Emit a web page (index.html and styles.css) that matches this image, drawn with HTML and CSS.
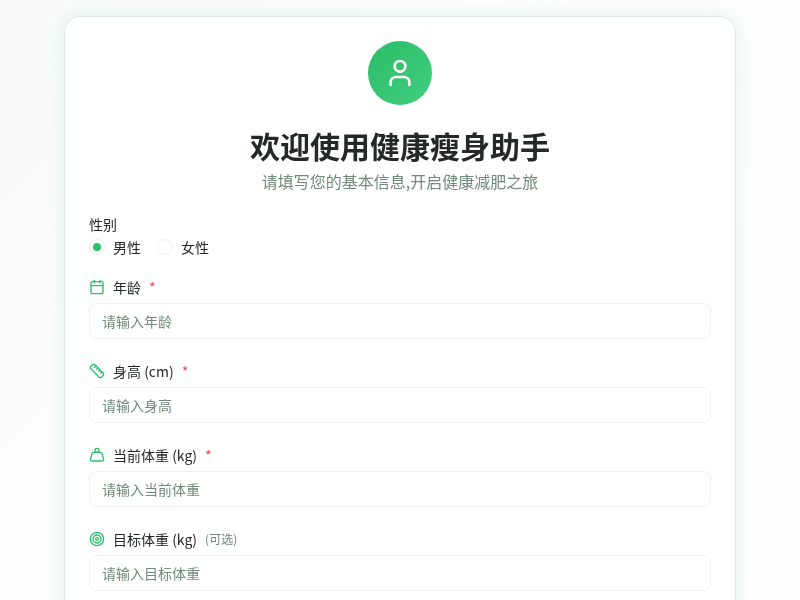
FILE: index.html
```html
<!DOCTYPE html>
<html lang="zh-CN">
<head>
  <meta charset="UTF-8">
  <title>健康瘦身助手</title>
  <meta name="viewport" content="width=device-width, initial-scale=1.0">
  <link rel="stylesheet" href="styles.css">
</head>
<body>
  <div class="card">
    <div class="header">
      <div class="logo">
        <svg width="32" height="32" viewBox="0 0 24 24" fill="none" stroke="#fff" stroke-width="2" stroke-linecap="round" stroke-linejoin="round">
          <path d="M19 21v-2a4 4 0 0 0-4-4H9a4 4 0 0 0-4 4v2"/>
          <circle cx="12" cy="7" r="4"/>
        </svg>
      </div>
      <h1>欢迎使用健康瘦身助手</h1>
      <p class="subtitle">请填写您的基本信息,开启健康减肥之旅</p>
    </div>
    <form autocomplete="off">
      <div class="gender">
        <div class="gender-label">性别</div>
        <div class="radio-row">
          <label class="radio"><span class="dot checked"></span>男性</label>
          <label class="radio"><span class="dot"></span>女性</label>
        </div>
      </div>

      <div class="field">
        <label class="field-label" for="age">
          <svg class="icon" viewBox="0 0 24 24" fill="none" stroke="currentColor" stroke-width="2" stroke-linecap="round" stroke-linejoin="round">
            <path d="M8 2v4"/><path d="M16 2v4"/><rect x="3" y="4" width="18" height="18" rx="2"/><path d="M3 10h18"/>
          </svg>
          <span>年龄</span><span class="req">*</span>
        </label>
        <input id="age" type="number" placeholder="请输入年龄">
      </div>

      <div class="field">
        <label class="field-label" for="height">
          <svg class="icon" viewBox="0 0 24 24" fill="none" stroke="currentColor" stroke-width="2" stroke-linecap="round" stroke-linejoin="round">
            <path d="M21.3 15.3a2.4 2.4 0 0 1 0 3.4l-2.6 2.6a2.4 2.4 0 0 1-3.4 0L2.7 8.7a2.41 2.41 0 0 1 0-3.4l2.6-2.6a2.41 2.41 0 0 1 3.4 0Z"/>
            <path d="m14.5 12.5 2-2"/><path d="m11.5 9.5 2-2"/><path d="m8.5 6.5 2-2"/><path d="m17.5 15.5 2-2"/>
          </svg>
          <span>身高 (cm)</span><span class="req">*</span>
        </label>
        <input id="height" type="number" placeholder="请输入身高">
      </div>

      <div class="field">
        <label class="field-label" for="weight">
          <svg class="icon" viewBox="0 0 24 24" fill="none" stroke="currentColor" stroke-width="2" stroke-linecap="round" stroke-linejoin="round">
            <circle cx="12" cy="5" r="3"/>
            <path d="M6.5 8a2 2 0 0 0-1.905 1.46L2.1 18.5A2 2 0 0 0 4 21h16a2 2 0 0 0 1.925-2.54L19.4 9.5A2 2 0 0 0 17.48 8Z"/>
          </svg>
          <span>当前体重 (kg)</span><span class="req">*</span>
        </label>
        <input id="weight" type="number" placeholder="请输入当前体重">
      </div>

      <div class="field">
        <label class="field-label" for="target">
          <svg class="icon" viewBox="0 0 24 24" fill="none" stroke="currentColor" stroke-width="2" stroke-linecap="round" stroke-linejoin="round">
            <circle cx="12" cy="12" r="10"/><circle cx="12" cy="12" r="6"/><circle cx="12" cy="12" r="2"/>
          </svg>
          <span>目标体重 (kg)</span><span class="optional">(可选)</span>
        </label>
        <input id="target" type="number" placeholder="请输入目标体重">
      </div>
    </form>
  </div>
</body>
</html>
```

FILE: styles.css
```css
* {
  box-sizing: border-box;
}
body {
  font-family: "Noto Sans CJK SC", "Noto Sans", sans-serif;
  background: linear-gradient(135deg, #f8fbf9 0%, #fdfdfd 50%, #fdfefd 100%);
  min-height: 100vh;
  margin: 0;
  padding: 16px;
  color: #232926;
}
.card {
  width: 672px;
  margin: 0 auto;
  padding: 24px;
  background: #fff;
  border: 1px solid #dfece5;
  border-radius: 16px;
  box-shadow: 0 0 16px rgba(46, 180, 125, 0.14);
  will-change: transform;
}
.header {
  text-align: center;
  margin-bottom: 21px;
}
.logo {
  width: 64px;
  height: 64px;
  margin: 0 auto 22px;
  border-radius: 50%;
  background: linear-gradient(135deg, #2bbd68, #41cd80);
  display: flex;
  justify-content: center;
  align-items: center;
}
h1 {
  margin: 0;
  font-size: 30px;
  line-height: 36px;
  font-weight: 700;
  color: #232926;
}
.subtitle {
  margin: 6px 0 0;
  font-size: 16px;
  line-height: 24px;
  color: #718a79;
}
.gender {
  margin-bottom: 20px;
}
.gender-label {
  font-size: 14px;
  line-height: 20px;
  margin-bottom: 3px;
}
.radio-row {
  display: flex;
  gap: 16px;
}
.radio {
  display: flex;
  align-items: center;
  gap: 8px;
  font-size: 14px;
  line-height: 20px;
}
.dot {
  width: 16px;
  height: 16px;
  border: 1px solid #eef2ef;
  border-radius: 50%;
  display: flex;
  justify-content: center;
  align-items: center;
}
.dot.checked::after {
  content: '';
  width: 8px;
  height: 8px;
  border-radius: 50%;
  background: #28c268;
}
.field {
  margin-bottom: 22px;
}
.field-label {
  display: flex;
  align-items: center;
  font-size: 14px;
  line-height: 20px;
  margin-bottom: 6px;
}
.icon {
  width: 16px;
  height: 16px;
  color: #28c268;
  margin-right: 8px;
}
.req {
  margin-left: 8px;
  font-size: 14px;
  line-height: 16px;
  margin-top: -1px;
  color: #ef4444;
}
.optional {
  margin-left: 8px;
  font-size: 12px;
  color: #718a79;
}
input {
  display: block;
  width: 100%;
  height: 36px;
  padding: 0 12px;
  border: 1px solid #eef2ef;
  border-radius: 8px;
  font-family: inherit;
  font-size: 14px;
  background: #fff;
  outline: none;
}
input::placeholder {
  color: #718a79;
}
```
